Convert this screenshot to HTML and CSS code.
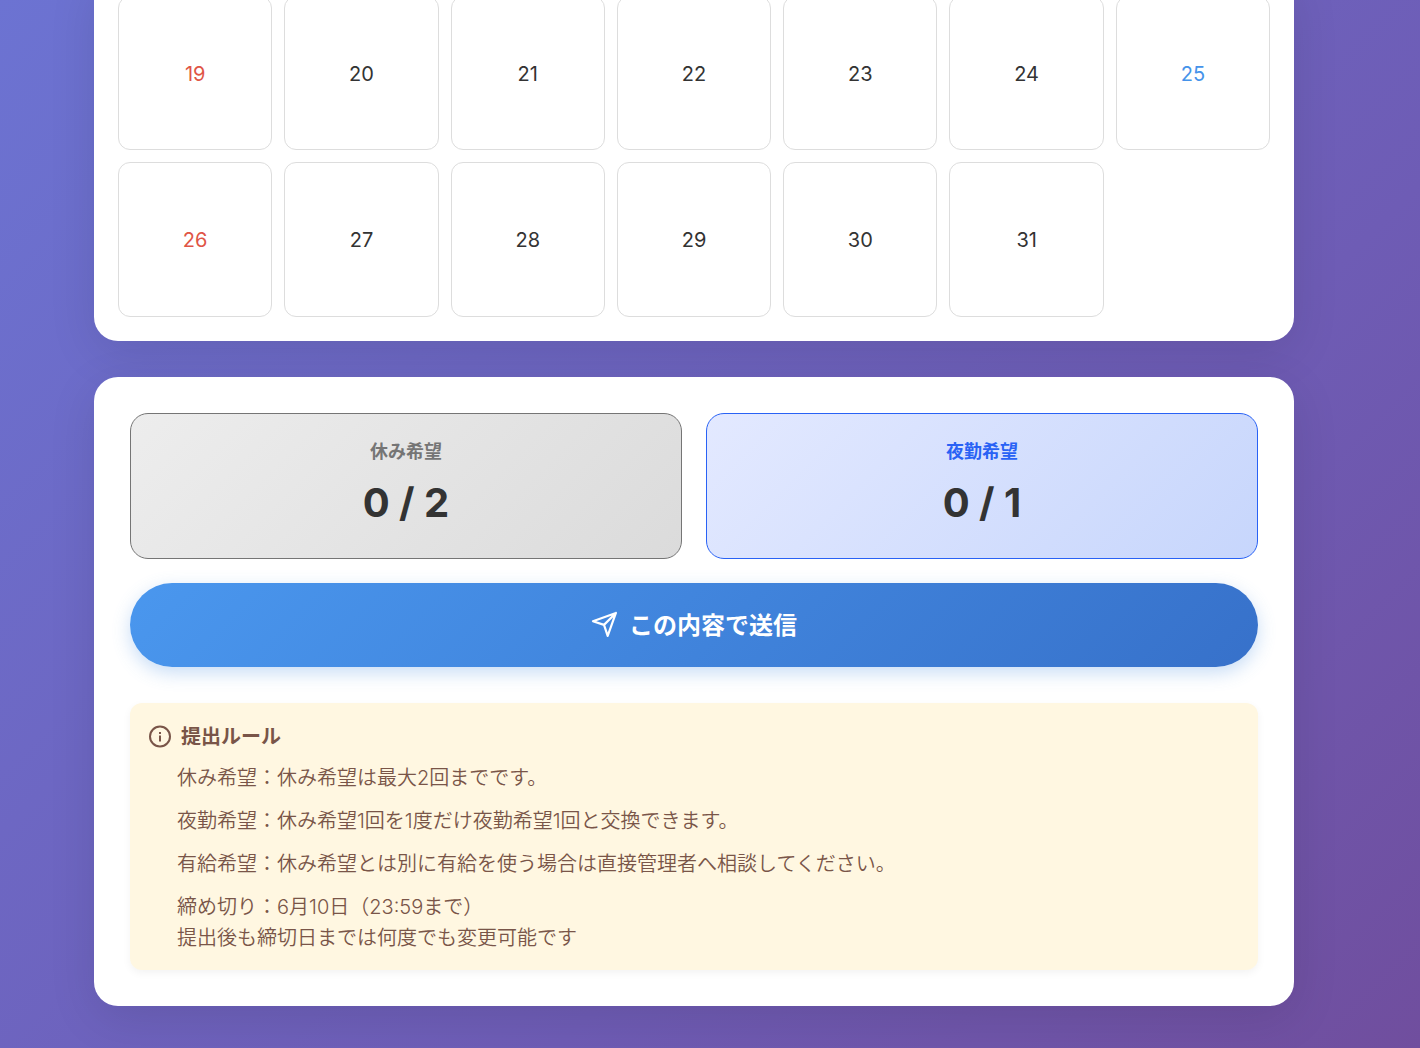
FILE: index.html
```html
<!DOCTYPE html>
<html lang="ja">
<head>
    <meta charset="UTF-8">
    <meta name="viewport" content="width=device-width, initial-scale=1.0">
    <title>希望休提出</title>
    <link rel="stylesheet" href="styles.css">
</head>
<body>
    <main class="container">

    <!-- calendar -->
    <section class="card calendar">
        <button type="button" class="day sun">19</button>
        <button type="button" class="day">20</button>
        <button type="button" class="day">21</button>
        <button type="button" class="day">22</button>
        <button type="button" class="day">23</button>
        <button type="button" class="day">24</button>
        <button type="button" class="day sat">25</button>
        <button type="button" class="day sun">26</button>
        <button type="button" class="day">27</button>
        <button type="button" class="day">28</button>
        <button type="button" class="day">29</button>
        <button type="button" class="day">30</button>
        <button type="button" class="day">31</button>
    </section>

    <!-- summary -->
    <section class="card summary">
        <div class="counts">
            <div class="count off">
                <p class="count-label">休み希望</p>
                <p class="count-value">0 / 2</p>
            </div>
            <div class="count night">
                <p class="count-label">夜勤希望</p>
                <p class="count-value">0 / 1</p>
            </div>
        </div>

        <button type="submit" class="submit-btn">
            <svg width="26" height="26" viewBox="0 0 24 24" fill="none" stroke="currentColor" stroke-width="2" stroke-linecap="round" stroke-linejoin="round"><path d="M23 1.8 12 12.8M23 1.8 15.4 23 12 12.8 1.8 9.4z"/></svg>
            <span>この内容で送信</span>
        </button>

        <div class="rules">
            <h2>
                <svg width="24" height="24" viewBox="0 0 24 24" fill="none" stroke="currentColor" stroke-width="2"><circle cx="12" cy="11.5" r="10"/><path d="M12 10.5v6M12 7v2"/></svg>
                提出ルール
            </h2>
            <ul>
                <li>休み希望：休み希望は最大2回までです。</li>
                <li>夜勤希望：休み希望1回を1度だけ夜勤希望1回と交換できます。</li>
                <li>有給希望：休み希望とは別に有給を使う場合は直接管理者へ相談してください。</li>
                <li>締め切り：6月10日（23:59まで）<br>提出後も締切日までは何度でも変更可能です</li>
            </ul>
        </div>
    </section>

    </main>
</body>
</html>
```

FILE: styles.css
```css
* {
    margin: 0;
    padding: 0;
    box-sizing: border-box;
    font-family: Inter, "Noto Sans CJK JP", sans-serif;
}

body {
    background: linear-gradient(135deg, #6c73d2 0%, #6e5cb5 65%, #704e9e 100%);
    color: #333;
    min-height: 100vh;
    padding: 0 32px 42px 0;
}

.container {
    max-width: 1200px;
    margin: 0 auto;
    display: flex;
    flex-direction: column;
    gap: 36px;
}

.card {
    background: #fff;
    border-radius: 24px;
    box-shadow: 0 12px 48px rgba(0, 0, 0, 0.1);
}

/* calendar */
.calendar {
    display: grid;
    grid-template-columns: repeat(7, 1fr);
    gap: 12px;
    padding: 24px;
    margin-top: -28px;
}

.day {
    aspect-ratio: 1;
    padding-top: 2px;
    background: #fff;
    border: 1px solid #ddd;
    border-radius: 12px;
    color: #333;
    font-size: 20px;
    cursor: pointer;
}

.day.sun {
    color: #e05546;
}

.day.sat {
    color: #4593ea;
}

/* summary */
.summary {
    padding: 36px;
}

.counts {
    display: grid;
    grid-template-columns: 1fr 1fr;
    gap: 24px;
}

.count {
    border: 1px solid;
    border-radius: 18px;
    padding: 24px;
    text-align: center;
}

.count.off {
    background: linear-gradient(135deg, #ededed, #dbdbdb);
    border-color: #757575;
}

.count.night {
    background: linear-gradient(135deg, #e3e9ff, #c7d6fc);
    border-color: #2962f5;
}

.count-label {
    font-size: 18px;
    font-weight: 600;
    line-height: 27px;
    margin-bottom: 6px;
}

.off .count-label {
    color: #757575;
}

.night .count-label {
    color: #2962f5;
}

.count-value {
    font-size: 40px;
    font-weight: 700;
    font-feature-settings: "calt" 0;
    line-height: 63px;
}

.submit-btn {
    display: flex;
    align-items: center;
    justify-content: center;
    gap: 12px;
    width: 100%;
    height: 84px;
    padding-bottom: 2px;
    margin-top: 24px;
    border: 0;
    border-radius: 42px;
    background: linear-gradient(135deg, #4a97ee, #3771ca);
    box-shadow: 0 6px 18px rgba(74, 144, 226, 0.3);
    color: #fff;
    font-size: 24px;
    font-weight: 600;
    cursor: pointer;
}

.submit-btn svg {
    overflow: visible;
}

/* rules */
.rules {
    margin-top: 36px;
    padding: 19px 18px 16px;
    background: #fff7e1;
    border-radius: 12px;
    box-shadow: 0 3px 9px rgba(0, 0, 0, 0.05);
    color: #795548;
    line-height: 31px;
}

.rules h2 {
    display: flex;
    align-items: center;
    gap: 9px;
    margin-bottom: 10px;
    font-size: 20px;
    font-weight: 600;
}

.rules ul {
    list-style: none;
    padding-left: 29px;
    font-size: 20px;
    font-weight: 350;
}

.rules li + li {
    margin-top: 12px;
}
```
